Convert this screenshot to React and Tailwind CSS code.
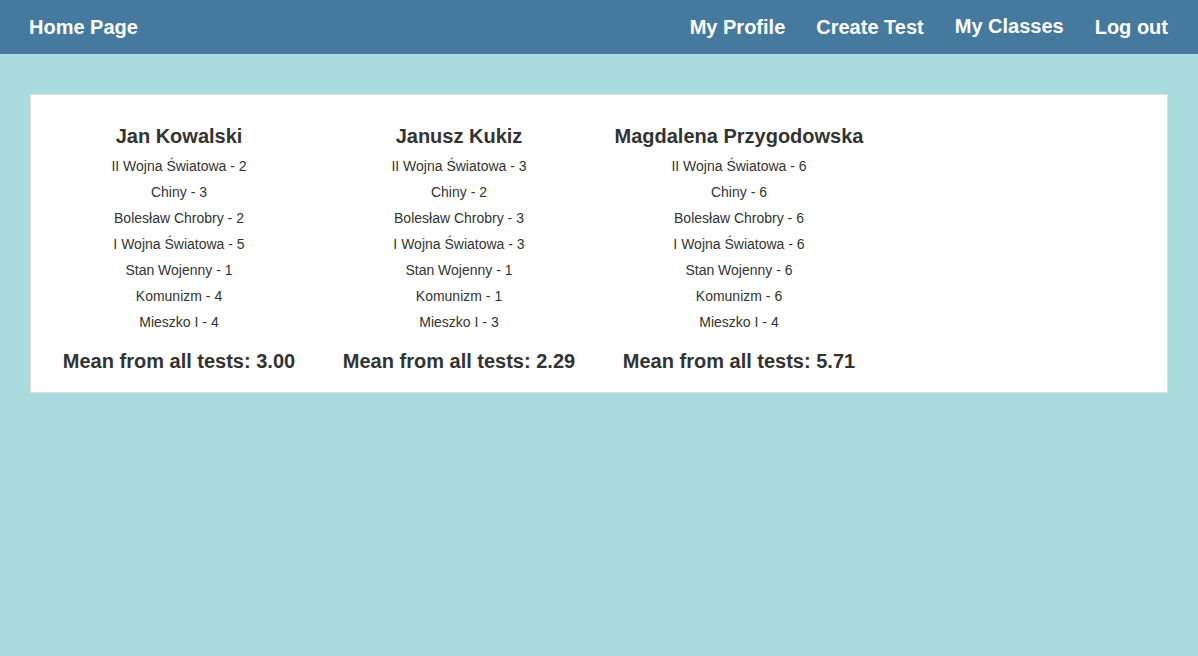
import React from 'react';

const students = [
  {
    name: 'Jan Kowalski',
    grades: [
      ['II Wojna Światowa', 2],
      ['Chiny', 3],
      ['Bolesław Chrobry', 2],
      ['I Wojna Światowa', 5],
      ['Stan Wojenny', 1],
      ['Komunizm', 4],
      ['Mieszko I', 4],
    ],
    mean: '3.00',
  },
  {
    name: 'Janusz Kukiz',
    grades: [
      ['II Wojna Światowa', 3],
      ['Chiny', 2],
      ['Bolesław Chrobry', 3],
      ['I Wojna Światowa', 3],
      ['Stan Wojenny', 1],
      ['Komunizm', 1],
      ['Mieszko I', 3],
    ],
    mean: '2.29',
  },
  {
    name: 'Magdalena Przygodowska',
    grades: [
      ['II Wojna Światowa', 6],
      ['Chiny', 6],
      ['Bolesław Chrobry', 6],
      ['I Wojna Światowa', 6],
      ['Stan Wojenny', 6],
      ['Komunizm', 6],
      ['Mieszko I', 4],
    ],
    mean: '5.71',
  },
];

const App = () => {
  return (
    <div className="min-h-screen bg-[#a9dadc] font-['Liberation_Sans',Arial,sans-serif]">
      {/* Navbar */}
      <nav className="h-[54px] bg-[#457a9e] flex items-center justify-between pl-[29px] pr-[30px] text-white text-[20px] font-bold">
        <a className="mt-[-1px]">Home Page</a>
        <div className="flex items-center gap-[31px]">
          <a className="mt-[-1px]">My Profile</a>
          <a className="mt-[-1px]">Create Test</a>
          <a className="mt-[-3px]">My Classes</a>
          <a className="mt-[-1px]">Log out</a>
        </div>
      </nav>

      {/* Grades card */}
      <div className="px-[30px] pt-[40px]">
        <div className="bg-white border border-[#dddddd] flex pl-[8px] pt-[29px] pb-[19px] text-[#333333]">
          {students.map((s) => (
            <div key={s.name} className="w-[280px] flex flex-col items-center">
              <h3 className="text-[20px] leading-[24px] font-bold">{s.name}</h3>
              <div className="mt-[5px] flex flex-col items-center">
                {s.grades.map(([topic, grade]) => (
                  <p key={topic} className="text-[14px] leading-[26px]">
                    {topic} - {grade}
                  </p>
                ))}
              </div>
              <p className="mt-[14px] text-[20px] leading-[24px] font-bold">
                Mean from all tests: {s.mean}
              </p>
            </div>
          ))}
        </div>
      </div>
    </div>
  );
};

export default App;
